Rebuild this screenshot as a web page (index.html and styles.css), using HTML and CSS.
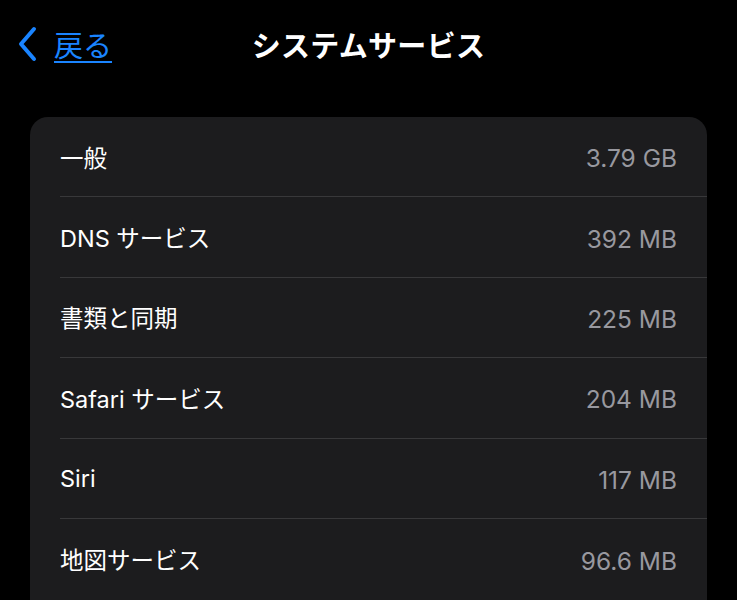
FILE: index.html
```html
<!DOCTYPE html>
<html lang="ja">
<head>
    <meta charset="UTF-8">
    <meta name="viewport" content="width=device-width, initial-scale=1.0">
    <title>システムサービス</title>
    <link rel="stylesheet" href="styles.css">
</head>
<body>
    <div class="nav">
        <a class="back" href="#">
            <svg class="chevron" width="22" height="36" viewBox="0 0 22 36">
                <path d="M18 3 L5 18 L18 33" fill="none" stroke="#1a84ff" stroke-width="4" stroke-linecap="round" stroke-linejoin="round"/>
            </svg>
            <span class="back-text">戻る</span>
        </a>
        <h1 class="title">システムサービス</h1>
        <div></div>
    </div>
    <div class="card">
        <div class="row"><span class="label">一般</span><span class="value">3.79 GB</span></div>
        <div class="row"><span class="label">DNS サービス</span><span class="value">392 MB</span></div>
        <div class="row"><span class="label">書類と同期</span><span class="value">225 MB</span></div>
        <div class="row"><span class="label">Safari サービス</span><span class="value">204 MB</span></div>
        <div class="row"><span class="label">Siri</span><span class="value">117 MB</span></div>
        <div class="row"><span class="label">地図サービス</span><span class="value">96.6 MB</span></div>
    </div>
</body>
</html>
```

FILE: styles.css
```css
body {
    margin: 0;
    background-color: #000;
    color: #fff;
    font-family: "Inter", "Noto Sans CJK JP", sans-serif;
}
.nav {
    height: 88px;
    display: grid;
    grid-template-columns: 1fr auto 1fr;
    align-items: center;
    padding: 0 16px;
}
.back {
    display: flex;
    align-items: center;
    gap: 16px;
    color: #1a84ff;
    text-decoration: none;
}
.chevron {
    display: block;
}
.back-text {
    font-size: 29px;
    text-decoration: underline;
    text-underline-offset: 4px;
    text-decoration-thickness: 2px;
}
.title {
    margin: 0;
    font-size: 29px;
    font-weight: 700;
    letter-spacing: 0.3px;
}
.card {
    margin: 29px 30px 0;
    padding-bottom: 20px;
    background-color: #1c1c1e;
    border-radius: 18px;
}
.row {
    height: 80.4px;
    box-sizing: border-box;
    margin-left: 30px;
    padding-right: 30px;
    display: flex;
    align-items: center;
    justify-content: space-between;
    border-bottom: 1px solid #38383a;
    font-size: 23.5px;
}
.row:last-child {
    border-bottom: none;
}
.value {
    color: #98989f;
    font-size: 24.5px;
    padding-top: 3px;
}
```
